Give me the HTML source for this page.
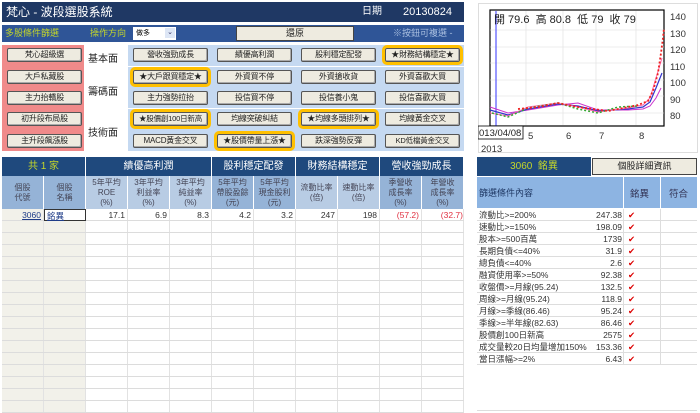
<!DOCTYPE html>
<html><head><meta charset="utf-8"><style>
*{margin:0;padding:0;box-sizing:border-box}
body{width:700px;height:413px;background:#fff;position:relative;overflow:hidden;font-family:"Liberation Sans","Noto Sans CJK TC",sans-serif;font-size:9px;color:#333}
.a{position:absolute}
.btn{position:absolute;width:75px;height:14px;background:#eeebe0;border:1px solid #555;border-radius:2px;text-align:center;line-height:12px;font-size:8px;color:#222;box-shadow:inset -1px -1px 0 #aaa;white-space:nowrap;overflow:hidden;letter-spacing:-0.2px}
.y{outline:3px solid #ffc000;outline-offset:0}
.hd{position:absolute;background:#1f497d;color:#fff;text-align:center;font-size:10px;line-height:19px;height:19px;border-right:1px solid #fff}
.sh{position:absolute;top:176px;height:33px;background:#b8cce4;color:#445;text-align:center;font-size:8px;line-height:10px;padding-top:2px;border-right:1px solid #fff}
.d{position:absolute;top:209px;height:12px;text-align:right;font-size:8.5px;line-height:12px;padding-right:3px}
.r{position:absolute;left:477px;width:220px;height:12px;border-bottom:1px solid #ddd;font-size:8.5px;line-height:12px}
.r span{position:absolute}
</style></head><body>
<div class="a" style="left:2px;top:2px;width:462px;height:20px;background:#1f3864;color:#fff;font-size:12px;line-height:20px;padding-left:4px">梵心 - 波段選股系統<span class="a" style="left:360px;font-size:10px">日期</span><span class="a" style="left:401px;font-size:11px">20130824</span></div>
<div class="a" style="left:2px;top:25px;width:462px;height:17px;background:#2f5597;line-height:17px;font-size:9px">
<span class="a" style="left:3px;color:#c4d62a">多股條件篩選</span><span class="a" style="left:88px;color:#c4d62a">操作方向</span>
<span class="a" style="left:131px;top:2px;width:43px;height:13px;background:#fff;font-size:7px;line-height:13px;padding-left:3px;color:#000">做多<span class="a" style="right:1px;top:1px;width:10px;height:10px;background:#dde6f5;color:#336;line-height:10px;text-align:center">⌄</span></span>
<span class="a" style="left:234px;top:1px;width:118px;height:15px;background:#eeebe0;border:1px solid #444;text-align:center;line-height:13px;color:#222">還原</span>
<span class="a" style="left:391px;color:#a9bfe0">※按鈕可複選 -</span></div>
<div class="a" style="left:2px;top:45px;width:82px;height:106px;background:#f08a8a"></div>
<div class="a" style="left:128px;top:45px;width:336px;height:106px;background:#c5d9f1"></div>
<div class="a" style="left:128px;top:66px;width:336px;height:1px;background:#fff"></div>
<div class="a" style="left:128px;top:108px;width:336px;height:1px;background:#fff"></div>
<div class="a" style="left:88px;top:50px;font-size:10px;color:#222">基本面</div>
<div class="a" style="left:88px;top:83px;font-size:10px;color:#222">籌碼面</div>
<div class="a" style="left:88px;top:124px;font-size:10px;color:#222">技術面</div>
<div class="btn" style="left:7px;top:48px">梵心超級選</div>
<div class="btn" style="left:7px;top:70px">大戶私藏股</div>
<div class="btn" style="left:7px;top:91px">主力抬轎股</div>
<div class="btn" style="left:7px;top:112px">初升段布局股</div>
<div class="btn" style="left:7px;top:134px">主升段飆漲股</div>
<div class="btn" style="left:133px;top:48px">營收強勁成長</div>
<div class="btn" style="left:217px;top:48px">績優高利潤</div>
<div class="btn" style="left:301px;top:48px">股利穩定配發</div>
<div class="btn y" style="left:385px;top:48px">★財務結構穩定★</div>
<div class="btn y" style="left:133px;top:70px">★大戶跟買穩定★</div>
<div class="btn" style="left:217px;top:70px">外資買不停</div>
<div class="btn" style="left:301px;top:70px">外資搶收貨</div>
<div class="btn" style="left:385px;top:70px">外資喜歡大買</div>
<div class="btn" style="left:133px;top:91px">主力強勢拉抬</div>
<div class="btn" style="left:217px;top:91px">投信買不停</div>
<div class="btn" style="left:301px;top:91px">投信養小鬼</div>
<div class="btn" style="left:385px;top:91px">投信喜歡大買</div>
<div class="btn y" style="left:133px;top:112px;font-size:7.5px">★股價創100日新高</div>
<div class="btn" style="left:217px;top:112px">均線突破糾結</div>
<div class="btn y" style="left:301px;top:112px">★均線多頭排列★</div>
<div class="btn" style="left:385px;top:112px">均線黃金交叉</div>
<div class="btn" style="left:133px;top:134px">MACD黃金交叉</div>
<div class="btn y" style="left:217px;top:134px">★股價帶量上漲★</div>
<div class="btn" style="left:301px;top:134px">跌深強勢反彈</div>
<div class="btn" style="left:385px;top:134px;font-size:7.5px">KD低檔黃金交叉</div>

<div class="hd" style="left:2px;top:157px;width:84px;color:#c4d62a">共 1 家</div>
<div class="hd" style="left:86px;top:157px;width:126px">績優高利潤</div>
<div class="hd" style="left:212px;top:157px;width:84px">股利穩定配發</div>
<div class="hd" style="left:296px;top:157px;width:84px">財務結構穩定</div>
<div class="hd" style="left:380px;top:157px;width:84px">營收強勁成長</div>
<div class="sh" style="left:2px;width:42px;background:#95b3d7;padding-top:7px">個股<br>代號</div>
<div class="sh" style="left:44px;width:42px;background:#95b3d7;padding-top:7px">個股<br>名稱</div>
<div class="sh" style="left:86px;width:42px">5年平均<br>ROE<br>(%)</div>
<div class="sh" style="left:128px;width:42px">3年平均<br>利益率<br>(%)</div>
<div class="sh" style="left:170px;width:42px">3年平均<br>純益率<br>(%)</div>
<div class="sh" style="left:212px;width:42px;background:#95b3d7">5年平均<br>帶股盈餘<br>(元)</div>
<div class="sh" style="left:254px;width:42px;background:#95b3d7">5年平均<br>現金股利<br>(元)</div>
<div class="sh" style="left:296px;width:42px;padding-top:7px">流動比率<br>(倍)</div>
<div class="sh" style="left:338px;width:42px;padding-top:7px">速動比率<br>(倍)</div>
<div class="sh" style="left:380px;width:42px;background:#95b3d7">季營收<br>成長率<br>(%)</div>
<div class="sh" style="left:422px;width:42px;background:#95b3d7">年營收<br>成長率<br>(%)</div>
<div class="a" style="left:2px;top:209px;width:84px;height:204px;background:#f2f1ea"></div>
<div class="a" style="left:2px;top:209px;width:462px;height:204px;background:repeating-linear-gradient(to bottom,transparent 0 11px,#dcdcdc 11px 12px),repeating-linear-gradient(to right,transparent 0 41px,#e2e2e2 41px 42px)"></div>
<div class="d" style="left:2px;width:42px;color:#1f3c88;text-decoration:underline">3060</div>
<div class="d" style="left:44px;width:42px;text-align:left;padding-left:2px;color:#1f3c88;text-decoration:underline;border:1.5px solid #333;background:#fff">銘異</div>
<div class="d" style="left:86px;width:42px">17.1</div>
<div class="d" style="left:128px;width:42px">6.9</div>
<div class="d" style="left:170px;width:42px">8.3</div>
<div class="d" style="left:212px;width:42px">4.2</div>
<div class="d" style="left:254px;width:42px">3.2</div>
<div class="d" style="left:296px;width:42px">247</div>
<div class="d" style="left:338px;width:42px">198</div>
<div class="d" style="left:380px;width:42px;color:#e03040">(57.2)</div>
<div class="d" style="left:422px;width:42px;color:#e03040;padding-right:1px">(32.7)</div>

<div class="a" style="left:478px;top:3px;width:220px;height:150px;border:1px solid #ddd"></div>
<svg class="a" style="left:478px;top:3px" width="220" height="150">
<rect x="12" y="7" width="174" height="116" fill="#fff" stroke="#000" stroke-width="1.2"/>
<g stroke="#ddd" stroke-width="0.6"><line x1="48" y1="8" x2="48" y2="122"/><line x1="85" y1="8" x2="85" y2="122"/><line x1="118" y1="8" x2="118" y2="122"/><line x1="158" y1="8" x2="158" y2="122"/><line x1="12" y1="110" x2="186" y2="110"/><line x1="12" y1="93" x2="186" y2="93"/><line x1="12" y1="77" x2="186" y2="77"/><line x1="12" y1="60" x2="186" y2="60"/><line x1="12" y1="44" x2="186" y2="44"/><line x1="12" y1="27" x2="186" y2="27"/></g>
<line x1="18" y1="8" x2="18" y2="123" stroke="#33f" stroke-width="1"/>
<polyline fill="none" stroke="#c3c" stroke-width="1" points="12,104 30,110 50,107 80,102 100,100 120,107 150,107 165,106 172,103 178,95 183,85"/>
<polyline fill="none" stroke="#33c" stroke-width="1.2" points="12,107 30,112 50,106 80,101 100,103 120,108 150,106 165,104 172,99 178,85 184,70"/>
<polyline fill="none" stroke="#f6a" stroke-width="1" points="12,110 30,113 50,104 80,100 100,104 120,109 150,105 165,102 172,95 178,75 184,55"/>
<polyline fill="none" stroke="#3a3" stroke-width="1.5" stroke-dasharray="2 2" points="14,110 30,114 50,105 80,100 100,106 120,110 140,104 160,103"/>
<polyline fill="none" stroke="#e22" stroke-width="1.8" stroke-dasharray="2 2" points="40,106 60,104 80,100 100,104 130,108 160,102 170,98 175,88 180,70 183,50 185,35 186,25"/>
<text x="16" y="20" font-size="11" fill="#222">開 79.6&#160; 高 80.8&#160; 低 79&#160; 收 79</text>
<g font-size="9.5" fill="#333"><text x="192" y="17">140</text><text x="192" y="34">130</text><text x="192" y="50">120</text><text x="192" y="67">110</text><text x="192" y="83">100</text><text x="192" y="100">90</text><text x="192" y="116">80</text>
<text x="50" y="136">5</text><text x="88" y="136">6</text><text x="121" y="136">7</text><text x="161" y="136">8</text><text x="3" y="149">2013</text></g>
<rect x="0" y="123" width="45" height="13" fill="#fff" stroke="#000" stroke-width="0.8"/><text x="1" y="133" font-size="9.5" fill="#222">013/04/08</text>
</svg>

<div class="a" style="left:477px;top:157px;width:114px;height:19px;background:#1f497d;color:#c4d62a;text-align:center;font-size:10px;line-height:19px">3060&#160; 銘異</div>
<div class="a" style="left:592px;top:158px;width:105px;height:17px;background:#eeebe0;border:1px solid #444;text-align:center;font-size:9px;line-height:15px;color:#222">個股詳細資訊</div>
<div class="a" style="left:477px;top:177px;width:220px;height:31px;background:#8db4e2"></div>
<div class="a" style="left:623px;top:177px;width:1px;height:31px;background:#fff"></div>
<div class="a" style="left:660px;top:177px;width:1px;height:31px;background:#fff"></div>
<div class="a" style="left:479px;top:186px;font-size:9px;color:#1f3864">篩選條件內容</div>
<div class="a" style="left:630px;top:186px;font-size:9.5px;color:#335">銘異</div>
<div class="a" style="left:669px;top:186px;font-size:9.5px;color:#335">符合</div>
<div class="a" style="left:623px;top:209px;width:1px;height:156px;background:#ddd"></div>
<div class="a" style="left:660px;top:209px;width:1px;height:156px;background:#ddd"></div>
<div class="r" style="top:209px"><span style="left:2px">流動比>=200%</span><span style="right:75px">247.38</span><span style="left:151px;color:#d00">✔</span></div>
<div class="r" style="top:221px"><span style="left:2px">速動比>=150%</span><span style="right:75px">198.09</span><span style="left:151px;color:#d00">✔</span></div>
<div class="r" style="top:233px"><span style="left:2px">股本>=500百萬</span><span style="right:75px">1739</span><span style="left:151px;color:#d00">✔</span></div>
<div class="r" style="top:245px"><span style="left:2px">長期負債<=40%</span><span style="right:75px">31.9</span><span style="left:151px;color:#d00">✔</span></div>
<div class="r" style="top:257px"><span style="left:2px">總負債<=40%</span><span style="right:75px">2.6</span><span style="left:151px;color:#d00">✔</span></div>
<div class="r" style="top:269px"><span style="left:2px">融資使用率>=50%</span><span style="right:75px">92.38</span><span style="left:151px;color:#d00">✔</span></div>
<div class="r" style="top:281px"><span style="left:2px">收盤價>=月線(95.24)</span><span style="right:75px">132.5</span><span style="left:151px;color:#d00">✔</span></div>
<div class="r" style="top:293px"><span style="left:2px">周線>=月線(95.24)</span><span style="right:75px">118.9</span><span style="left:151px;color:#d00">✔</span></div>
<div class="r" style="top:305px"><span style="left:2px">月線>=季線(86.46)</span><span style="right:75px">95.24</span><span style="left:151px;color:#d00">✔</span></div>
<div class="r" style="top:317px"><span style="left:2px">季線>=半年線(82.63)</span><span style="right:75px">86.46</span><span style="left:151px;color:#d00">✔</span></div>
<div class="r" style="top:329px"><span style="left:2px">股價創100日新高</span><span style="right:75px">2575</span><span style="left:151px;color:#d00">✔</span></div>
<div class="r" style="top:341px"><span style="left:2px">成交量較20日均量增加150%</span><span style="right:75px">153.36</span><span style="left:151px;color:#d00">✔</span></div>
<div class="r" style="top:353px"><span style="left:2px">當日漲幅>=2%</span><span style="right:75px">6.43</span><span style="left:151px;color:#d00">✔</span></div>
<div class="a" style="left:477px;top:410px;width:220px;height:1px;background:#ddd"></div>
</body></html>
